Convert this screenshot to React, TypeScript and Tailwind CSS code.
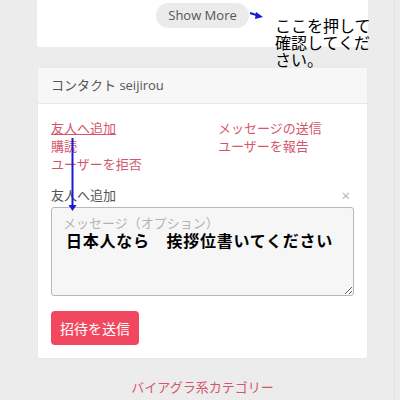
import React from 'react';

const jp = { fontFamily: '"Open Sans", "Noto Sans CJK JP", sans-serif' };

function App() {
  const leftLinks = ['購読', 'ユーザーを拒否'];
  const rightLinks = ['メッセージの送信', 'ユーザーを報告'];

  return (
    <main className="relative w-[400px] h-[400px] overflow-hidden bg-[#ececec]" style={jp}>
      <div className="w-[395px] h-[400px] border-r border-[#e2e2e2]">
        <div className="ml-[37px] w-[331px]">
          {/* top card, bottom part */}
          <div className="h-[47px] bg-white rounded-b-[3px] flex justify-center pt-[3px]">
            <button className="h-[25px] px-[12px] rounded-full bg-[#ebebeb] text-[13px] text-[#555]">
              Show More
            </button>
          </div>

          {/* contact card */}
          <div className="mt-[20px] bg-white rounded-[3px] border border-[#e9e9e9]">
            <div className="h-[36px] px-[13px] flex items-center bg-[#f7f7f7] border-b border-[#e8e8e8] text-[13px] text-[#555]">
              コンタクト seijirou
            </div>
            <div className="px-[13px] pt-[15px] pb-[13px]">
              <div className="flex text-[13px] leading-[18px] text-[#d5566c]">
                <div className="w-[167px] flex flex-col">
                  <a className="underline">友人へ追加</a>
                  {leftLinks.map((l) => (
                    <a key={l}>{l}</a>
                  ))}
                </div>
                <div className="flex flex-col">
                  {rightLinks.map((l) => (
                    <a key={l}>{l}</a>
                  ))}
                </div>
              </div>

              <div className="mt-[13px] flex items-center justify-between text-[13px] leading-[18px] text-[#555]">
                <span>友人へ追加</span>
                <span className="text-[#b3b3b3] text-[15px] mr-[4px]">×</span>
              </div>
              <textarea
                className="mt-[3px] block w-[303px] h-[89px] px-[11px] py-[6px] text-[13px] bg-[#f6f6f6] border border-[#b8b8b8] rounded-[3px] placeholder:text-[#b3b3b3]"
                placeholder="メッセージ（オプション）"
              />
              <button className="mt-[15px] h-[34px] w-[88px] rounded-[4px] bg-[#f1485f] text-white text-[14px]">
                招待を送信
              </button>
            </div>
          </div>

          <div className="mt-[19px] text-center text-[13px] leading-[18px] text-[#d5566c]">
            バイアグラ系カテゴリー
          </div>
        </div>
      </div>

      {/* annotations */}
      <svg className="absolute left-0 top-0" width="400" height="400">
        <line x1="250" y1="13" x2="258" y2="15.5" stroke="#1b1bd0" strokeWidth="2" />
        <polygon points="263,17 256,12 255,19" fill="#1b1bd0" />
        <line x1="72.5" y1="138" x2="72.5" y2="206" stroke="#1b1bd0" strokeWidth="2" />
        <polygon points="72.5,211 68.5,205 76.5,205" fill="#1b1bd0" />
      </svg>
      <div className="absolute left-[275px] top-[18px] w-[98px] text-[16px] leading-[17px] text-black" style={jp}>
        ここを押して確認してください。
      </div>
      <div className="absolute left-[66px] top-[231px] text-[16px] leading-[20px] font-bold tracking-[0.75px] text-black" style={jp}>
        日本人なら　挨拶位書いてください
      </div>
    </main>
  );
}

export default App;
